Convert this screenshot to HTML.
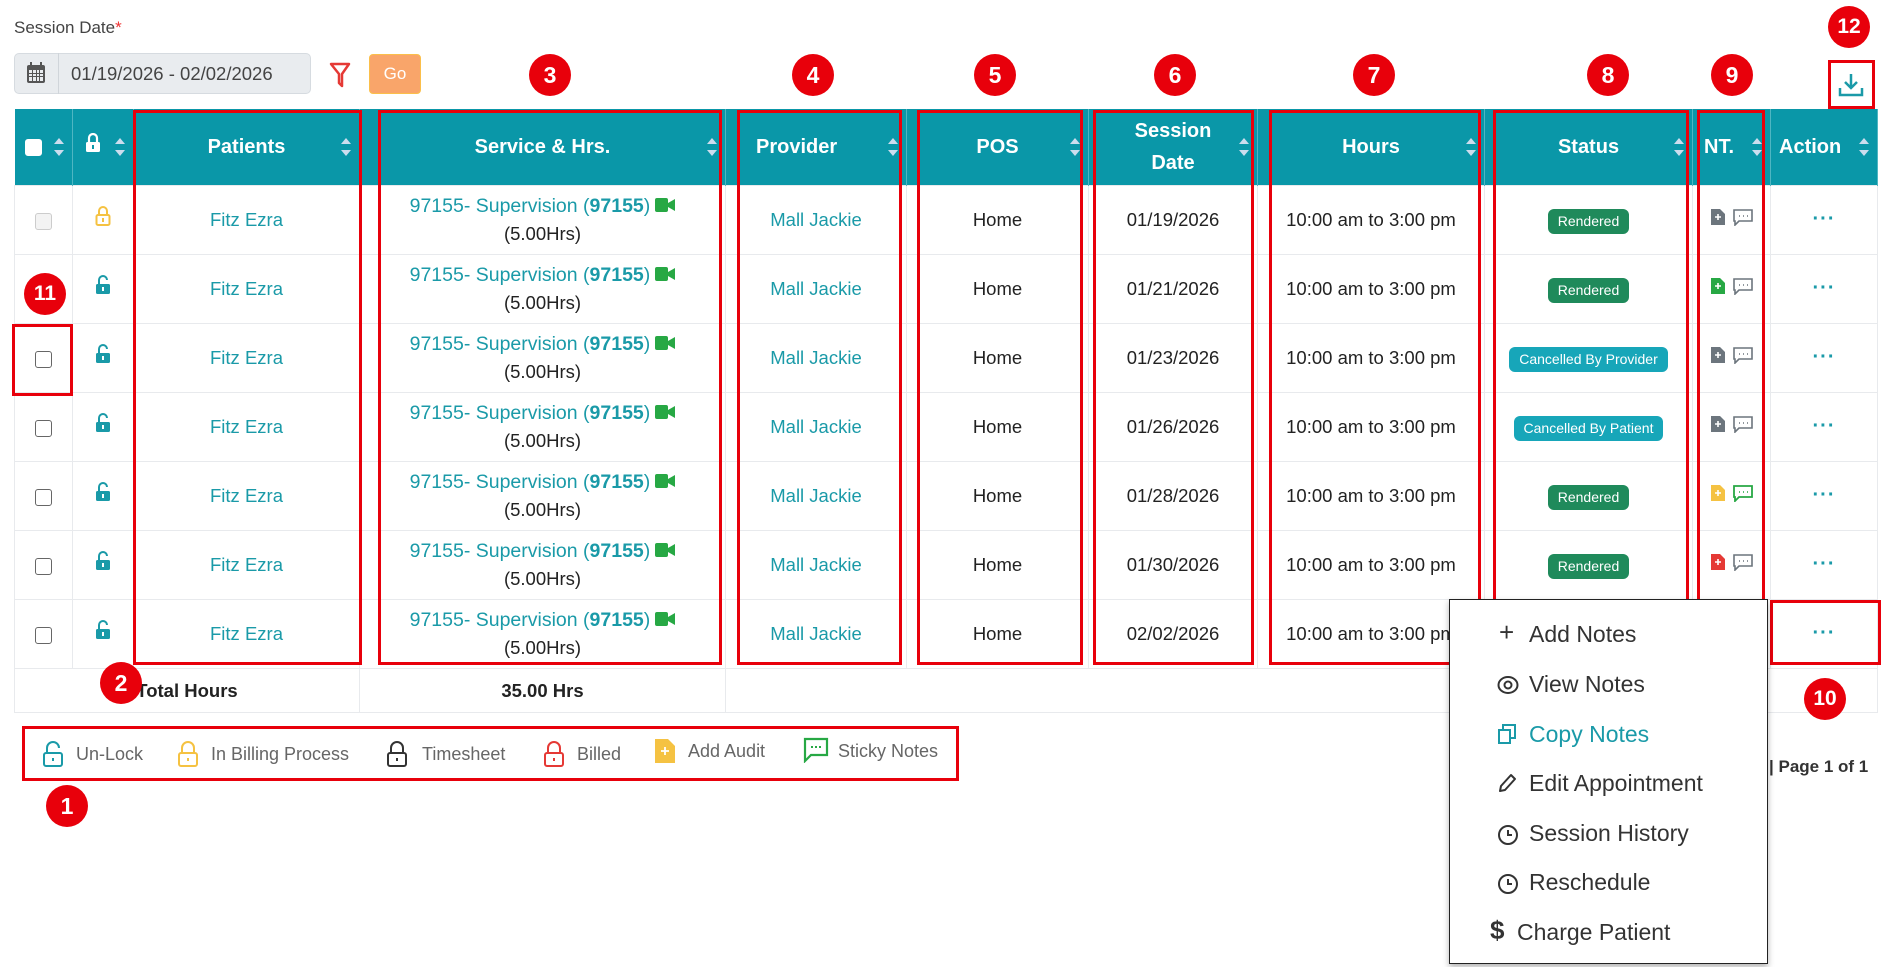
<!DOCTYPE html>
<html><head><meta charset="utf-8"><style>
*{box-sizing:border-box;margin:0;padding:0}
body{width:1895px;height:967px;background:#fff;font-family:"Liberation Sans",sans-serif;position:relative;overflow:hidden;color:#222}
.abs{position:absolute}
table{position:absolute;left:14px;top:109px;border-collapse:collapse;table-layout:fixed;width:1863px}
th{background:#0a97a8;color:#fff;font-size:20px;font-weight:bold;height:76px;border-right:1px solid #4fb6c2;position:relative;line-height:32px}
td{height:69px;border:1px solid #e8eaed;text-align:center;font-size:18.5px;color:#222;vertical-align:middle;line-height:27px}
.sort{position:absolute;right:8px;top:29px;width:10px;height:18px}
.sort:before,.sort:after{content:"";position:absolute;left:0;border-left:5px solid transparent;border-right:5px solid transparent}
.sort:before{top:0;border-bottom:6px solid #cde}
.sort:after{bottom:0;border-top:6px solid #cde}
.lnk{color:#1a9aa8}
.sv{font-size:19.5px}
.cb{display:inline-block;width:17px;height:17px;border:1.5px solid #666;border-radius:3px;vertical-align:middle;background:#fff}
.pill{display:inline-block;color:#fff;font-size:14px;padding:4px 10px;border-radius:6px;line-height:17px}
.g{background:#1f8a5b}.t{background:#17a6b9}
.rb{position:absolute;border:3px solid #e8000b}
.num{position:absolute;width:42px;height:42px;border-radius:50%;background:#e8000b;color:#fff;font-weight:bold;font-size:23px;text-align:center;line-height:42px}
.menu{position:absolute;left:1449px;top:599px;width:319px;height:365px;background:#fff;border:1.5px solid #222;box-shadow:0 3px 6px rgba(0,0,0,.3)}
.mi{position:absolute;left:50px;font-size:23px;color:#333;line-height:28px}
.mic{position:absolute;left:-22px;top:5px}
.leg{position:absolute;top:744px;font-size:18px;color:#666}
</style></head><body>
<div class="abs" style="left:14px;top:18px;font-size:17px;color:#444">Session Date<span style="color:#e33">*</span></div>
<div class="abs" style="left:14px;top:53px;width:297px;height:41px;background:#e9ecef;border:1px solid #d6dbe0;border-radius:5px"></div>
<div class="abs" style="left:58px;top:53px;width:1px;height:41px;background:#d0d5da"></div>
<svg class="abs" style="left:26px;top:62px" width="20" height="22" viewBox="0 0 20 22"><rect x="1" y="3" width="18" height="18" rx="2" fill="#555"/><rect x="3" y="8" width="14" height="11" fill="#e9ecef"/><g fill="#555"><rect x="3" y="11" width="14" height="1"/><rect x="3" y="14" width="14" height="1"/><rect x="6" y="8" width="1" height="11"/><rect x="10" y="8" width="1" height="11"/><rect x="13" y="8" width="1" height="11"/><rect x="4" y="0" width="2" height="5"/><rect x="14" y="0" width="2" height="5"/></g></svg>
<div class="abs" style="left:71px;top:63px;font-size:18.5px;color:#444">01/19/2026 - 02/02/2026</div>
<svg class="abs" style="left:329px;top:62px" width="22" height="26" viewBox="0 0 22 26"><path d="M2 2 H20 L13 12 V24 L10 21 V12 Z" fill="none" stroke="#e53935" stroke-width="2.5" stroke-linejoin="round"/></svg>
<div class="abs" style="left:369px;top:54px;width:52px;height:40px;background:#f9a56a;border:1px solid #fbbf4a;border-radius:4px;color:#fff;font-size:17px;text-align:center;line-height:38px">Go</div>
<svg class="abs" style="left:1838px;top:72px" width="26" height="26" viewBox="0 0 26 26" fill="none" stroke="#1a9aa8" stroke-width="2.5"><path d="M13 2V16M7 10L13 16L19 10M2 16V23H24V16"/></svg>

<table>
<colgroup><col style="width:58px"><col style="width:61px"><col style="width:226px"><col style="width:366px"><col style="width:181px"><col style="width:182px"><col style="width:169px"><col style="width:227px"><col style="width:208px"><col style="width:78px"><col style="width:107px"></colgroup>
<tr>
<th style="text-align:left;padding-left:10px"><span class="cb" style="border-color:#fff"></span><i class="sort"></i></th>
<th style="text-align:left;padding-left:12px"><svg width="16" height="20" viewBox="0 0 16 20"><path d="M4 9V5a4 4 0 0 1 8 0v4" fill="none" stroke="#fff" stroke-width="2.2"/><rect x="1" y="9" width="14" height="10" rx="1.5" fill="#fff"/><rect x="7" y="12" width="2" height="4" fill="#0a97a8"/></svg><i class="sort"></i></th>
<th>Patients<i class="sort"></i></th>
<th>Service &amp; Hrs.<i class="sort"></i></th>
<th style="text-align:left;padding-left:30px">Provider<i class="sort"></i></th>
<th>POS<i class="sort"></i></th>
<th style="line-height:32px">Session<br>Date<i class="sort"></i></th>
<th>Hours<i class="sort"></i></th>
<th>Status<i class="sort"></i></th>
<th style="text-align:left;padding-left:11px">NT.<i class="sort"></i></th>
<th style="text-align:left;padding-left:8px">Action<i class="sort"></i></th>
</tr>
<tr><td><span class="cb" style="border-color:#ccc;background:#f3f3f3"></span></td><td><svg width="16" height="20" viewBox="0 0 16 20"><path d="M4 9V5a4 4 0 0 1 8 0v4" fill="none" stroke="#f5c242" stroke-width="2"/><rect x="1.5" y="9" width="13" height="10" rx="1.5" fill="none" stroke="#f5c242" stroke-width="2"/><rect x="7" y="12" width="2" height="4" fill="#f5c242"/></svg></td><td class="lnk">Fitz Ezra</td><td><span class="lnk sv">97155- Supervision (<b>97155</b>)</span> <svg width="20" height="14" viewBox="0 0 20 14"><rect width="13" height="14" rx="2" fill="#27a844"/><path d="M13 5L20 1V13L13 9Z" fill="#27a844"/></svg><br>(5.00Hrs)</td><td class="lnk">Mall Jackie</td><td>Home</td><td>01/19/2026</td><td>10:00 am to 3:00 pm</td><td><span class="pill g">Rendered</span></td><td><svg width="44" height="18" viewBox="0 0 44 18"><path d="M1 1H10L15 6V17H1Z" fill="#6c757d"/><path d="M8 6V12M5 9H11" stroke="#fff" stroke-width="1.6"/><path d="M24 2H42V13H29L25 17V13H24Z" fill="none" stroke="#6c757d" stroke-width="1.6"/><path d="M29 8h1M33 8h1M37 8h1" stroke="#6c757d" stroke-width="1.6"/></svg></td><td class="lnk" style="font-weight:bold;font-size:20px;letter-spacing:1px">···</td></tr>
<tr><td><span class="cb"></span></td><td><svg width="16" height="20" viewBox="0 0 16 20"><path d="M4 9V5a4 4 0 0 1 8 0" fill="none" stroke="#1a9aa8" stroke-width="2"/><rect x="1" y="9" width="14" height="10" rx="1.5" fill="#1a9aa8"/><rect x="7" y="12" width="2" height="4" fill="#fff"/></svg></td><td class="lnk">Fitz Ezra</td><td><span class="lnk sv">97155- Supervision (<b>97155</b>)</span> <svg width="20" height="14" viewBox="0 0 20 14"><rect width="13" height="14" rx="2" fill="#27a844"/><path d="M13 5L20 1V13L13 9Z" fill="#27a844"/></svg><br>(5.00Hrs)</td><td class="lnk">Mall Jackie</td><td>Home</td><td>01/21/2026</td><td>10:00 am to 3:00 pm</td><td><span class="pill g">Rendered</span></td><td><svg width="44" height="18" viewBox="0 0 44 18"><path d="M1 1H10L15 6V17H1Z" fill="#27a844"/><path d="M8 6V12M5 9H11" stroke="#fff" stroke-width="1.6"/><path d="M24 2H42V13H29L25 17V13H24Z" fill="none" stroke="#6c757d" stroke-width="1.6"/><path d="M29 8h1M33 8h1M37 8h1" stroke="#6c757d" stroke-width="1.6"/></svg></td><td class="lnk" style="font-weight:bold;font-size:20px;letter-spacing:1px">···</td></tr>
<tr><td><span class="cb"></span></td><td><svg width="16" height="20" viewBox="0 0 16 20"><path d="M4 9V5a4 4 0 0 1 8 0" fill="none" stroke="#1a9aa8" stroke-width="2"/><rect x="1" y="9" width="14" height="10" rx="1.5" fill="#1a9aa8"/><rect x="7" y="12" width="2" height="4" fill="#fff"/></svg></td><td class="lnk">Fitz Ezra</td><td><span class="lnk sv">97155- Supervision (<b>97155</b>)</span> <svg width="20" height="14" viewBox="0 0 20 14"><rect width="13" height="14" rx="2" fill="#27a844"/><path d="M13 5L20 1V13L13 9Z" fill="#27a844"/></svg><br>(5.00Hrs)</td><td class="lnk">Mall Jackie</td><td>Home</td><td>01/23/2026</td><td>10:00 am to 3:00 pm</td><td><span class="pill t">Cancelled By Provider</span></td><td><svg width="44" height="18" viewBox="0 0 44 18"><path d="M1 1H10L15 6V17H1Z" fill="#6c757d"/><path d="M8 6V12M5 9H11" stroke="#fff" stroke-width="1.6"/><path d="M24 2H42V13H29L25 17V13H24Z" fill="none" stroke="#6c757d" stroke-width="1.6"/><path d="M29 8h1M33 8h1M37 8h1" stroke="#6c757d" stroke-width="1.6"/></svg></td><td class="lnk" style="font-weight:bold;font-size:20px;letter-spacing:1px">···</td></tr>
<tr><td><span class="cb"></span></td><td><svg width="16" height="20" viewBox="0 0 16 20"><path d="M4 9V5a4 4 0 0 1 8 0" fill="none" stroke="#1a9aa8" stroke-width="2"/><rect x="1" y="9" width="14" height="10" rx="1.5" fill="#1a9aa8"/><rect x="7" y="12" width="2" height="4" fill="#fff"/></svg></td><td class="lnk">Fitz Ezra</td><td><span class="lnk sv">97155- Supervision (<b>97155</b>)</span> <svg width="20" height="14" viewBox="0 0 20 14"><rect width="13" height="14" rx="2" fill="#27a844"/><path d="M13 5L20 1V13L13 9Z" fill="#27a844"/></svg><br>(5.00Hrs)</td><td class="lnk">Mall Jackie</td><td>Home</td><td>01/26/2026</td><td>10:00 am to 3:00 pm</td><td><span class="pill t">Cancelled By Patient</span></td><td><svg width="44" height="18" viewBox="0 0 44 18"><path d="M1 1H10L15 6V17H1Z" fill="#6c757d"/><path d="M8 6V12M5 9H11" stroke="#fff" stroke-width="1.6"/><path d="M24 2H42V13H29L25 17V13H24Z" fill="none" stroke="#6c757d" stroke-width="1.6"/><path d="M29 8h1M33 8h1M37 8h1" stroke="#6c757d" stroke-width="1.6"/></svg></td><td class="lnk" style="font-weight:bold;font-size:20px;letter-spacing:1px">···</td></tr>
<tr><td><span class="cb"></span></td><td><svg width="16" height="20" viewBox="0 0 16 20"><path d="M4 9V5a4 4 0 0 1 8 0" fill="none" stroke="#1a9aa8" stroke-width="2"/><rect x="1" y="9" width="14" height="10" rx="1.5" fill="#1a9aa8"/><rect x="7" y="12" width="2" height="4" fill="#fff"/></svg></td><td class="lnk">Fitz Ezra</td><td><span class="lnk sv">97155- Supervision (<b>97155</b>)</span> <svg width="20" height="14" viewBox="0 0 20 14"><rect width="13" height="14" rx="2" fill="#27a844"/><path d="M13 5L20 1V13L13 9Z" fill="#27a844"/></svg><br>(5.00Hrs)</td><td class="lnk">Mall Jackie</td><td>Home</td><td>01/28/2026</td><td>10:00 am to 3:00 pm</td><td><span class="pill g">Rendered</span></td><td><svg width="44" height="18" viewBox="0 0 44 18"><path d="M1 1H10L15 6V17H1Z" fill="#f5c242"/><path d="M8 6V12M5 9H11" stroke="#fff" stroke-width="1.6"/><path d="M24 2H42V13H29L25 17V13H24Z" fill="none" stroke="#27a844" stroke-width="1.8"/><path d="M29 8h1M33 8h1M37 8h1" stroke="#27a844" stroke-width="1.6"/></svg></td><td class="lnk" style="font-weight:bold;font-size:20px;letter-spacing:1px">···</td></tr>
<tr><td><span class="cb"></span></td><td><svg width="16" height="20" viewBox="0 0 16 20"><path d="M4 9V5a4 4 0 0 1 8 0" fill="none" stroke="#1a9aa8" stroke-width="2"/><rect x="1" y="9" width="14" height="10" rx="1.5" fill="#1a9aa8"/><rect x="7" y="12" width="2" height="4" fill="#fff"/></svg></td><td class="lnk">Fitz Ezra</td><td><span class="lnk sv">97155- Supervision (<b>97155</b>)</span> <svg width="20" height="14" viewBox="0 0 20 14"><rect width="13" height="14" rx="2" fill="#27a844"/><path d="M13 5L20 1V13L13 9Z" fill="#27a844"/></svg><br>(5.00Hrs)</td><td class="lnk">Mall Jackie</td><td>Home</td><td>01/30/2026</td><td>10:00 am to 3:00 pm</td><td><span class="pill g">Rendered</span></td><td><svg width="44" height="18" viewBox="0 0 44 18"><path d="M1 1H10L15 6V17H1Z" fill="#e53935"/><path d="M8 6V12M5 9H11" stroke="#fff" stroke-width="1.6"/><path d="M24 2H42V13H29L25 17V13H24Z" fill="none" stroke="#6c757d" stroke-width="1.6"/><path d="M29 8h1M33 8h1M37 8h1" stroke="#6c757d" stroke-width="1.6"/></svg></td><td class="lnk" style="font-weight:bold;font-size:20px;letter-spacing:1px">···</td></tr>
<tr><td><span class="cb"></span></td><td><svg width="16" height="20" viewBox="0 0 16 20"><path d="M4 9V5a4 4 0 0 1 8 0" fill="none" stroke="#1a9aa8" stroke-width="2"/><rect x="1" y="9" width="14" height="10" rx="1.5" fill="#1a9aa8"/><rect x="7" y="12" width="2" height="4" fill="#fff"/></svg></td><td class="lnk">Fitz Ezra</td><td><span class="lnk sv">97155- Supervision (<b>97155</b>)</span> <svg width="20" height="14" viewBox="0 0 20 14"><rect width="13" height="14" rx="2" fill="#27a844"/><path d="M13 5L20 1V13L13 9Z" fill="#27a844"/></svg><br>(5.00Hrs)</td><td class="lnk">Mall Jackie</td><td>Home</td><td>02/02/2026</td><td>10:00 am to 3:00 pm</td><td></td><td></td><td class="lnk" style="font-weight:bold;font-size:20px;letter-spacing:1px">···</td></tr>
<tr><td colspan="3" style="height:44px;font-weight:bold">Total Hours</td><td style="height:44px;font-weight:bold">35.00 Hrs</td><td colspan="7" style="height:44px"></td></tr>
</table>

<div class="rb" style="left:133px;top:110px;width:229px;height:555px"></div>
<div class="rb" style="left:378px;top:110px;width:344px;height:555px"></div>
<div class="rb" style="left:737px;top:110px;width:165px;height:555px"></div>
<div class="rb" style="left:917px;top:110px;width:166px;height:555px"></div>
<div class="rb" style="left:1093px;top:110px;width:161px;height:555px"></div>
<div class="rb" style="left:1269px;top:110px;width:212px;height:555px"></div>
<div class="rb" style="left:1493px;top:110px;width:196px;height:555px"></div>
<div class="rb" style="left:1697px;top:110px;width:68px;height:555px"></div>
<div class="rb" style="left:12px;top:324px;width:61px;height:72px"></div>
<div class="rb" style="left:1770px;top:600px;width:111px;height:65px"></div>
<div class="rb" style="left:1828px;top:60px;width:47px;height:49px"></div>
<div class="rb" style="left:22px;top:726px;width:937px;height:55px"></div>

<svg class="abs" style="left:42px;top:741px" width="22" height="26" viewBox="0 0 22 26"><path d="M5 12V7a6 6 0 0 1 12 0" fill="none" stroke="#1a9aa8" stroke-width="2"/><rect x="2" y="12" width="18" height="13" rx="2" fill="none" stroke="#1a9aa8" stroke-width="2"/><rect x="10" y="17" width="2" height="3" fill="#1a9aa8"/></svg>
<div class="leg" style="left:76px">Un-Lock</div>
<svg class="abs" style="left:177px;top:741px" width="22" height="26" viewBox="0 0 22 26"><path d="M5 12V7a6 6 0 0 1 12 0v5" fill="none" stroke="#f5c242" stroke-width="2"/><rect x="2" y="12" width="18" height="13" rx="2" fill="none" stroke="#f5c242" stroke-width="2"/><rect x="10" y="17" width="2" height="3" fill="#f5c242"/></svg>
<div class="leg" style="left:211px">In Billing Process</div>
<svg class="abs" style="left:386px;top:741px" width="22" height="26" viewBox="0 0 22 26"><path d="M5 12V7a6 6 0 0 1 12 0v5" fill="none" stroke="#333" stroke-width="2"/><rect x="2" y="12" width="18" height="13" rx="2" fill="none" stroke="#333" stroke-width="2"/><rect x="10" y="17" width="2" height="3" fill="#333"/></svg>
<div class="leg" style="left:422px">Timesheet</div>
<svg class="abs" style="left:543px;top:741px" width="22" height="26" viewBox="0 0 22 26"><path d="M5 12V7a6 6 0 0 1 12 0v5" fill="none" stroke="#e53935" stroke-width="2"/><rect x="2" y="12" width="18" height="13" rx="2" fill="none" stroke="#e53935" stroke-width="2"/><rect x="10" y="17" width="2" height="3" fill="#e53935"/></svg>
<div class="leg" style="left:577px">Billed</div>
<svg class="abs" style="left:654px;top:738px" width="22" height="26" viewBox="0 0 22 26"><path d="M1 1H14L21 8V25H1Z" fill="#f5c242"/><path d="M11 9V17M7 13H15" stroke="#fff" stroke-width="1.8"/></svg>
<div class="leg" style="left:688px;top:741px">Add Audit</div>
<svg class="abs" style="left:803px;top:737px" width="26" height="26" viewBox="0 0 26 26"><path d="M2 2H24V18H8L2 24Z" fill="none" stroke="#27a844" stroke-width="2.2"/><path d="M8 10h2M12 10h2M16 10h2" stroke="#27a844" stroke-width="2"/></svg>
<div class="leg" style="left:838px;top:741px">Sticky Notes</div>

<div class="abs" style="left:1769px;top:757px;font-size:17px;font-weight:bold;color:#333">| Page 1 of 1</div>

<div class="menu">
<div class="mi" style="top:20px;left:79px"><span class="mic" style="left:-30px;top:-2px;font-size:26px">+</span>Add Notes</div>
<div class="mi" style="top:70px;left:79px;"><svg class="mic" style="left:-32px" width="22" height="20" viewBox="0 0 22 20"><ellipse cx="11" cy="10" rx="9.5" ry="8" fill="none" stroke="#333" stroke-width="2"/><circle cx="11" cy="10" r="3.5" fill="none" stroke="#333" stroke-width="2"/></svg>View Notes</div>
<div class="mi" style="top:120px;left:79px;color:#1a9aa8"><svg class="mic" style="left:-32px;top:3px" width="20" height="22" viewBox="0 0 20 22"><rect x="2" y="7" width="11" height="13" fill="none" stroke="#1a9aa8" stroke-width="2"/><path d="M6 7V2H18V15H13" fill="none" stroke="#1a9aa8" stroke-width="2"/></svg>Copy Notes</div>
<div class="mi" style="top:169px;left:79px"><svg class="mic" style="left:-32px;top:3px" width="20" height="22" viewBox="0 0 20 22"><path d="M3 19L4 14L14 3L18 7L8 18Z" fill="none" stroke="#333" stroke-width="2" stroke-linejoin="round"/></svg>Edit Appointment</div>
<div class="mi" style="top:219px;left:79px"><svg class="mic" style="left:-32px;top:5px" width="22" height="22" viewBox="0 0 22 22"><circle cx="11" cy="11" r="9" fill="none" stroke="#333" stroke-width="2"/><path d="M11 6V11H15" fill="none" stroke="#333" stroke-width="2"/></svg>Session History</div>
<div class="mi" style="top:268px;left:79px"><svg class="mic" style="left:-32px;top:5px" width="22" height="22" viewBox="0 0 22 22"><circle cx="11" cy="11" r="9" fill="none" stroke="#333" stroke-width="2"/><path d="M11 6V11H15" fill="none" stroke="#333" stroke-width="2"/></svg>Reschedule</div>
<div class="mi" style="top:318px;left:67px"><span class="mic" style="left:-27px;top:-2px;font-weight:bold;font-size:26px">$</span>Charge Patient</div>
</div>

<div class="num" style="left:46px;top:785px">1</div>
<div class="num" style="left:100px;top:662px">2</div>
<div class="num" style="left:529px;top:54px">3</div>
<div class="num" style="left:792px;top:54px">4</div>
<div class="num" style="left:974px;top:54px">5</div>
<div class="num" style="left:1154px;top:54px">6</div>
<div class="num" style="left:1353px;top:54px">7</div>
<div class="num" style="left:1587px;top:54px">8</div>
<div class="num" style="left:1711px;top:54px">9</div>
<div class="num" style="left:1804px;top:678px;font-size:21px">10</div>
<div class="num" style="left:24px;top:273px;font-size:21px">11</div>
<div class="num" style="left:1828px;top:6px;font-size:21px">12</div>
</body></html>
